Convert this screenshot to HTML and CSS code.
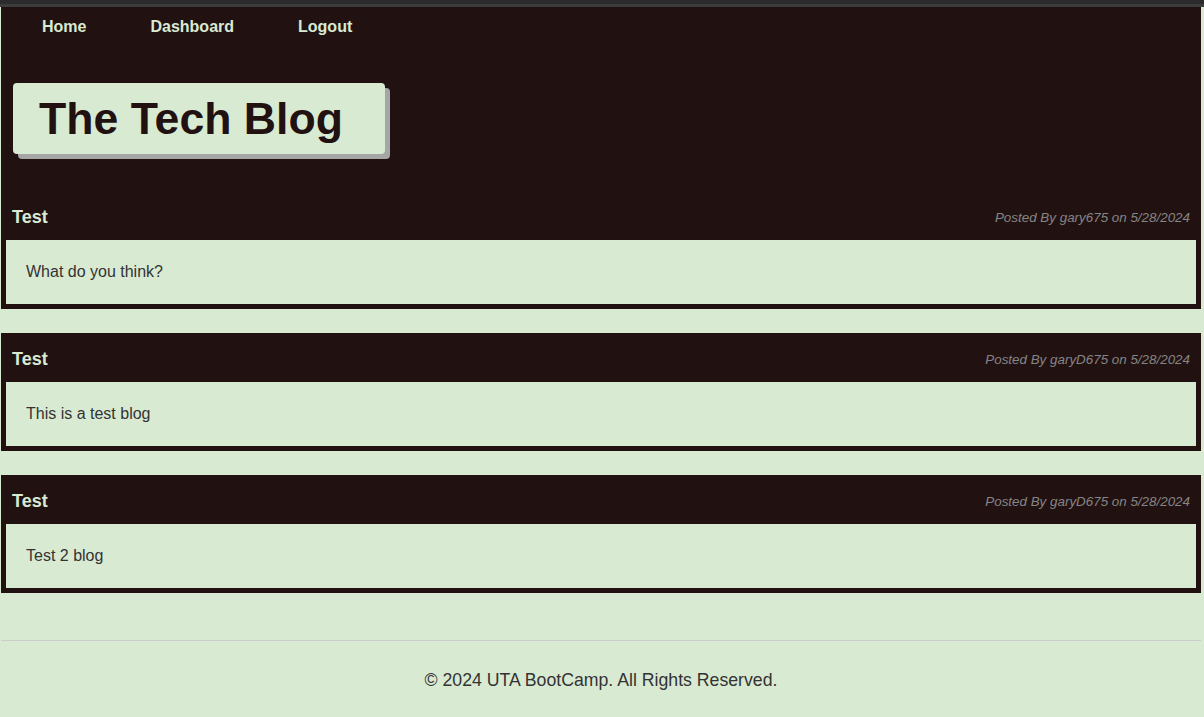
FILE: index.html
```html
<!DOCTYPE html>
<html lang="en">
<head>
<meta charset="utf-8">
<title>The Tech Blog</title>
<link rel="stylesheet" href="styles.css">
</head>
<body>
<div class="chrome"></div>
<div class="page">
  <header class="site-header">
    <nav class="nav">
      <a href="#">Home</a>
      <a href="#">Dashboard</a>
      <a href="#">Logout</a>
    </nav>
    <div class="title-wrap">
      <h1 class="title">The Tech Blog</h1>
    </div>
  </header>
  <main class="posts">
    <article class="post">
      <div class="post-head">
        <h2 class="post-title">Test</h2>
        <span class="post-meta">Posted By gary675 on 5/28/2024</span>
      </div>
      <div class="post-body">What do you think?</div>
    </article>
    <article class="post">
      <div class="post-head">
        <h2 class="post-title">Test</h2>
        <span class="post-meta">Posted By garyD675 on 5/28/2024</span>
      </div>
      <div class="post-body">This is a test blog</div>
    </article>
    <article class="post">
      <div class="post-head">
        <h2 class="post-title">Test</h2>
        <span class="post-meta">Posted By garyD675 on 5/28/2024</span>
      </div>
      <div class="post-body">Test 2 blog</div>
    </article>
  </main>
  <footer class="footer">© 2024 UTA BootCamp. All Rights Reserved.</footer>
</div>
</body>
</html>
```

FILE: styles.css
```css
html, body {
  margin: 0;
  padding: 0;
}
body {
  background: #d9ead3;
  font-family: "Liberation Sans", Arial, sans-serif;
  color: #333;
  height: 717px;
  overflow: hidden;
}
.chrome {
  height: 4px;
  background: #2b2b2b;
  border-bottom: 3px solid #3c3c3c;
}
.page {
  margin: 0 3px 0 1px;
}
.site-header {
  background: #221111;
  padding-bottom: 37px;
}
.nav {
  display: flex;
  gap: 64px;
  padding: 11px 0 9px 41px;
}
.nav a {
  color: #d9ead3;
  font-weight: bold;
  font-size: 16px;
  line-height: 18px;
  text-decoration: none;
}
.title-wrap {
  padding: 38px 0 0 12px;
  display: flex;
}
.title {
  margin: 0;
  background: #d9ead3;
  color: #221111;
  font-size: 44.6px;
  line-height: 51px;
  font-weight: bold;
  padding: 10px 42px 10px 26px;
  border-radius: 4px;
  box-shadow: 5px 5px 0 #a6a6a6;
}
.posts {
  display: flex;
  flex-direction: column;
  gap: 24px;
}
.post {
  background: #221111;
  padding: 0 5px 5px;
}
.post-head {
  height: 49px;
  box-sizing: border-box;
  padding: 3px 6px 0;
  display: flex;
  align-items: center;
  justify-content: space-between;
}
.post-title {
  margin: 0;
  color: #d9ead3;
  font-size: 18px;
  font-weight: bold;
  line-height: 20px;
}
.post-meta {
  color: #858585;
  font-style: italic;
  font-size: 13.4px;
}
.post-body {
  background: #d9ead3;
  color: #333;
  font-size: 16px;
  line-height: 20px;
  padding: 22px 20px;
}
.footer {
  margin-top: 47px;
  border-top: 1px solid #cccccc;
  padding-top: 29px;
  text-align: center;
  font-size: 17.7px;
  line-height: 21px;
  color: #333;
}
```
